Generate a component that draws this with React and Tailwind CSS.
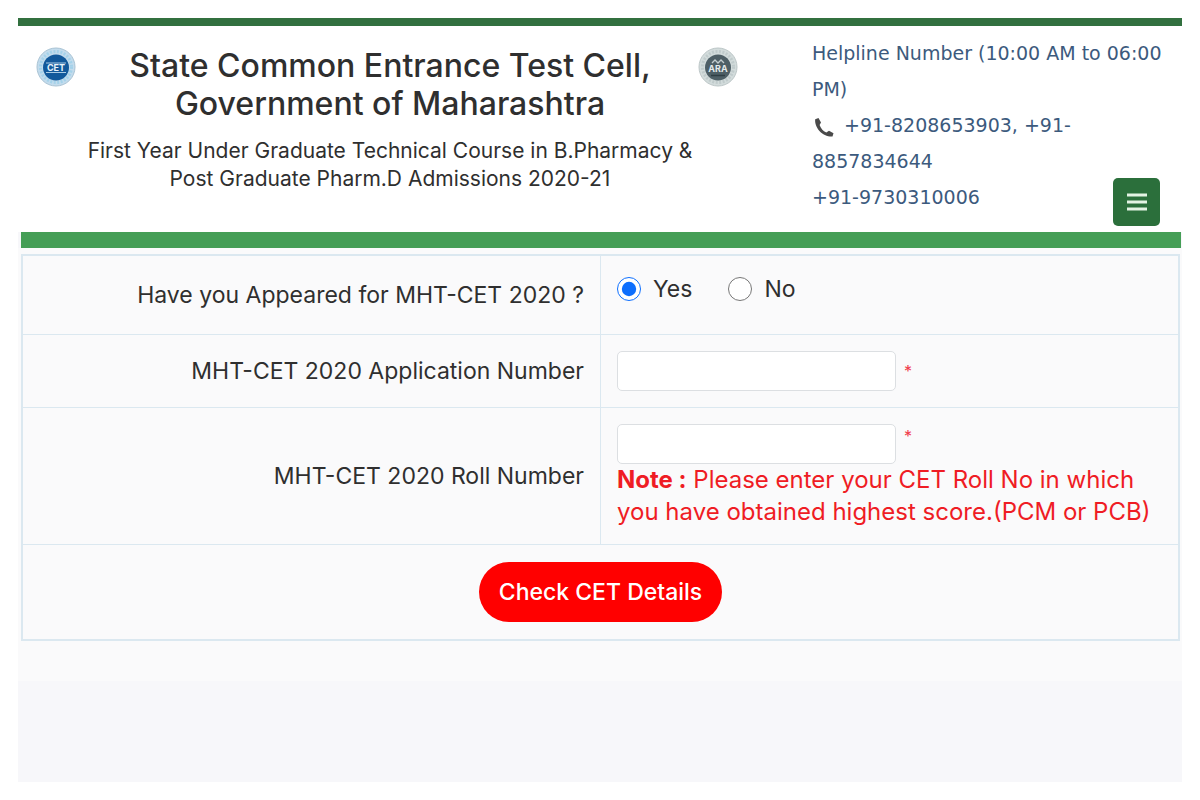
import React, { useState } from 'react';

function CetLogo() {
  return (
    <svg viewBox="0 0 40 40" className="w-10 h-10 shrink-0" role="img" aria-label="CET Cell">
      <circle cx="20" cy="20" r="19" fill="#c3dced" stroke="#a9c3d4" strokeWidth="1" />
      <circle cx="20" cy="20" r="15.5" fill="none" stroke="#8fcbe8" strokeWidth="3" strokeDasharray="2 1.5" opacity="0.6" />
      <circle cx="20" cy="20.5" r="13" fill="#12599b" />
      <path d="M10 16h20M10 25.5h20" stroke="#a9cbe4" strokeWidth="1" />
      <text x="20" y="24" textAnchor="middle" fontSize="9" fontWeight="700" fill="#e8f4fb">CET</text>
    </svg>
  );
}

function AraLogo() {
  return (
    <svg viewBox="0 0 40 40" className="w-10 h-10 shrink-0" role="img" aria-label="Admissions Regulating Authority">
      <circle cx="20" cy="20" r="19" fill="#d3dcdc" stroke="#bcc6c7" strokeWidth="1" />
      <circle cx="20" cy="20" r="15.5" fill="none" stroke="#b4c0c2" strokeWidth="3" strokeDasharray="2 1.5" opacity="0.6" />
      <circle cx="20" cy="20.5" r="13" fill="#4e5f66" />
      <path d="M14 16l3-3 3 3 3-3 3 3" fill="none" stroke="#c3cdcf" strokeWidth="1.3" />
      <text x="20" y="25" textAnchor="middle" fontSize="9" fontWeight="700" fill="#e3eaeb">ARA</text>
      <path d="M13 28.5h14" stroke="#2f3e44" strokeWidth="1.5" />
    </svg>
  );
}

function PhoneIcon() {
  return (
    <svg viewBox="0 0 24 24" className="w-6 h-6 inline-block mr-2" fill="#4a4a4a" aria-hidden="true">
      <path d="M6.5 3 3.2 4.2C2.2 12.5 10.5 22 20.5 21.5L21.5 18.2 17 15.8 14.3 17.6C11 16 8.7 13.3 7.6 10L9 7.5Z" />
    </svg>
  );
}

function Header() {
  return (
    <header className="border-t-8 border-[#32703f] bg-white pl-[18px] pr-[22px] flex items-stretch">
      <div className="pt-[21px]"><CetLogo /></div>
      <div className="flex-1 pt-[21px] pl-1.5 text-center text-[#2f2f2f]">
        <h1 className="text-[32px] leading-[38px] font-medium">
          State Common Entrance Test Cell,<br />Government of Maharashtra
        </h1>
        <p className="mt-[14px] -mx-4 text-[21px] leading-7">
          First Year Under Graduate Technical Course in B.Pharmacy &amp;<br />
          Post Graduate Pharm.D Admissions 2020-21
        </p>
      </div>
      <div className="pt-[21px]"><AraLogo /></div>
      <div className="w-[348px] ml-[74px] pt-[9px] pb-[17px] relative font-['DejaVu_Sans',sans-serif] text-[19px] leading-9 text-[#3c5a7d]">
        <p className="whitespace-nowrap">Helpline Number (10:00 AM to 06:00</p>
        <p>PM)</p>
        <p className="whitespace-nowrap"><PhoneIcon />+91-8208653903, +91-</p>
        <p>8857834644</p>
        <p>+91-9730310006</p>
        <button
          type="button"
          aria-label="Menu"
          className="absolute right-0 bottom-[6px] w-[47px] h-12 rounded-[5px] bg-[#2b6f3b] flex items-center justify-center"
        >
          <svg viewBox="0 0 20 20" className="w-5 h-5" stroke="#e3f3e3" strokeWidth="3">
            <path d="M0 3h20M0 10h20M0 17h20" />
          </svg>
        </button>
      </div>
    </header>
  );
}

const cell = 'border border-[#dbe8f0] px-4';
const input = 'w-[279px] h-10 px-3 rounded-[5px] border border-[#dcdfe2] bg-white align-middle outline-none';

export default function App() {
  const [appeared, setAppeared] = useState('yes');

  return (
    <div className="min-h-screen bg-white p-[18px] flex flex-col font-['Inter',sans-serif] text-[#2f2f2f]">
      <Header />
      <main className="flex-1 bg-[#f7f7fa]">
        <div className="h-4 ml-[3px] mr-px bg-[#459e56]" />
        <form className="bg-[#fafafb] pl-[3px] pr-[2px] pt-[6px] pb-10" onSubmit={(e) => e.preventDefault()}>
          <table className="w-full table-fixed border-collapse border-2 border-[#dbe8f0] text-[23px] leading-8">
            <tbody>
              <tr>
                <th scope="row" className={`${cell} py-[23px] text-right font-normal`}>Have you Appeared for MHT-CET 2020 ?</th>
                <td className={`${cell} pt-[17px] pb-[29px]`}>
                  <div className="flex gap-9">
                    <label className="flex items-center gap-3">
                      <input type="radio" name="appeared" className="w-6 h-6 accent-[#0d6efd]" checked={appeared === 'yes'} onChange={() => setAppeared('yes')} />
                      Yes
                    </label>
                    <label className="flex items-center gap-3">
                      <input type="radio" name="appeared" className="w-6 h-6" checked={appeared === 'no'} onChange={() => setAppeared('no')} />
                      No
                    </label>
                  </div>
                </td>
              </tr>
              <tr>
                <th scope="row" className={`${cell} py-4 text-right font-normal`}>
                  <label htmlFor="applicationNo">MHT-CET 2020 Application Number</label>
                </th>
                <td className={`${cell} py-4`}>
                  <div className="flex items-center gap-2">
                    <input id="applicationNo" type="text" className={input} />
                    <span className="text-base text-[#f03a4a]">*</span>
                  </div>
                </td>
              </tr>
              <tr>
                <th scope="row" className={`${cell} py-4 text-right font-normal`}>
                  <label htmlFor="rollNo">MHT-CET 2020 Roll Number</label>
                </th>
                <td className={`${cell} py-4`}>
                  <div className="flex items-start gap-2">
                    <input id="rollNo" type="text" className={input} />
                    <span className="text-base text-[#f03a4a]">*</span>
                  </div>
                  <p className="text-2xl leading-8 text-[#ef1c24]">
                    <b>Note :</b> Please enter your CET Roll No in which<br />
                    you have obtained highest score.(PCM or PCB)
                  </p>
                </td>
              </tr>
              <tr>
                <td colSpan={2} className={`${cell} py-[17px] text-center`}>
                  <button type="submit" className="rounded-full bg-[#ff0000] px-5 py-[14px] text-[23px] leading-8 font-medium text-white align-middle">
                    Check CET Details
                  </button>
                </td>
              </tr>
            </tbody>
          </table>
        </form>
      </main>
    </div>
  );
}
